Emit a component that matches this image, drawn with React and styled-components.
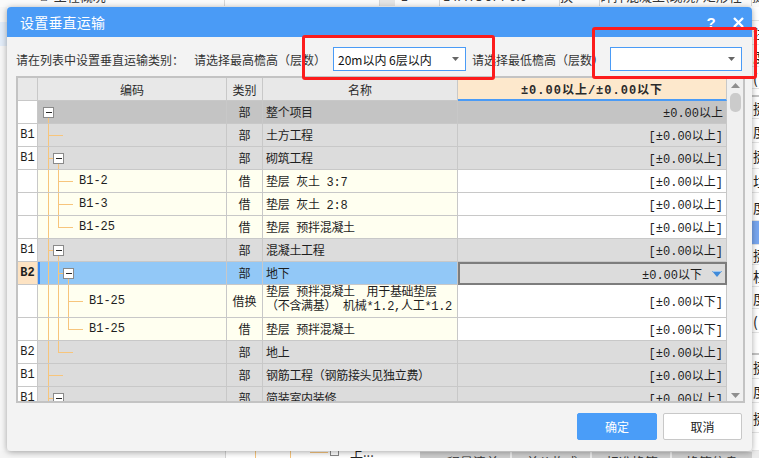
import React from "react";
import styled, { createGlobalStyle } from "styled-components";

const CJK = `"Noto Sans CJK SC", "Noto Sans", sans-serif`;
const GRID_FONT = `"Liberation Mono", "Noto Sans CJK SC", monospace`;
const TREE_LINE = "#f7c57c";
const COLS = "20px 189px 36px 195px 269px";

const GlobalStyle = createGlobalStyle`
  html, body {
    margin: 0;
    padding: 0;
    overflow: hidden;
    background: #ffffff;
  }
  * {
    box-sizing: border-box;
  }
`;

// rows of the grid, kind decides the colours
const rows = [
  { num: "", depth: 0, box: true, type: "部", name: "整个项目", value: "±0.00以上", kind: "root" },
  { num: "B1", depth: 1, type: "部", name: "土方工程", value: "[±0.00以上]", kind: "part" },
  { num: "B1", depth: 1, box: true, type: "部", name: "砌筑工程", value: "[±0.00以上]", kind: "part" },
  { num: "", depth: 2, code: "B1-2", type: "借", name: "垫层 灰土 3:7", value: "[±0.00以上]", kind: "item", through: [0] },
  { num: "", depth: 2, code: "B1-3", type: "借", name: "垫层 灰土 2:8", value: "[±0.00以上]", kind: "item", through: [0] },
  { num: "", depth: 2, code: "B1-25", last: true, type: "借", name: "垫层 预拌混凝土", value: "[±0.00以上]", kind: "item", through: [0] },
  { num: "B1", depth: 1, box: true, type: "部", name: "混凝土工程", value: "[±0.00以上]", kind: "part" },
  { num: "B2", depth: 2, box: true, type: "部", name: "地下", value: "±0.00以下", kind: "selected", through: [0] },
  {
    num: "", depth: 3, code: "B1-25", type: "借换",
    name: ["垫层 预拌混凝土　用于基础垫层", "（不含满基） 机械*1.2,人工*1.2"],
    value: "[±0.00以下]", kind: "item", through: [0, 1], tall: true,
  },
  { num: "", depth: 3, code: "B1-25", last: true, type: "借", name: "垫层 预拌混凝土", value: "[±0.00以下]", kind: "item", through: [0, 1] },
  { num: "B2", depth: 2, last: true, type: "部", name: "地上", value: "[±0.00以上]", kind: "part", through: [0] },
  { num: "B1", depth: 1, type: "部", name: "钢筋工程（钢筋接头见独立费）", value: "[±0.00以上]", kind: "part" },
  { num: "B1", depth: 1, box: true, type: "部", name: "简装室内装修", value: "[±0.00以上]", kind: "part" },
];

const rowBg = {
  root: "#c4c4c4",
  part: "#dcdcdc",
  item: "#fffff0",
  selected: "#92c8f7",
};
const valueBg = {
  root: "#c4c4c4",
  part: "#dcdcdc",
  item: "#ffffff",
  selected: "#dcdcdc",
};

const rightCells = [
  [14, ""], [24, "注"], [22, "度"], [22, "("], [8, "", "line"], [22, "揵"], [24, "度"],
  [26, "揵"], [24, "垃"], [28, "度"], [24, "", "blue"], [20, "揵"], [22, "柱"], [22, "度"],
  [24, "("], [22, "", "line"], [24, "揵"], [24, "度"], [30, "揵"], [18, ""],
];

const Tree = ({ row, h }) => {
  const mid = Math.floor(h / 2);
  const y = mid + 0.5;
  const d = row.depth;
  const parts = [];
  (row.through || []).forEach((k) => {
    const x = 10 + 10 * k + 0.5;
    parts.push(<line key={"t" + k} x1={x} y1={0} x2={x} y2={h} stroke={TREE_LINE} />);
  });
  let cx = 10;
  if (d > 0) {
    const px = 10 + 10 * (d - 1);
    cx = px + 10;
    parts.push(<line key="v" x1={px + 0.5} y1={0} x2={px + 0.5} y2={row.last ? y : h} stroke={TREE_LINE} />);
    parts.push(<line key="h" x1={px} y1={y} x2={row.box ? cx - 5 : px + 15} y2={y} stroke={TREE_LINE} />);
  }
  if (row.box) {
    parts.push(<line key="c" x1={cx + 0.5} y1={mid + 6} x2={cx + 0.5} y2={h} stroke={TREE_LINE} />);
    parts.push(<rect key="b" x={cx - 4.5} y={mid - 4.5} width={10} height={10} fill="#ffffff" stroke="#8a8a8a" />);
    parts.push(<line key="m" x1={cx - 2} y1={y} x2={cx + 4} y2={y} stroke="#2a2a2a" />);
  }
  return (
    <TreeSvg width={21 + 10 * d} height={h} shapeRendering="crispEdges">
      {parts}
    </TreeSvg>
  );
};

const Caret = ({ color = "#666" }) => (
  <svg width="7" height="4" viewBox="0 0 7 4">
    <path d="M0 0 H7 L3.5 4 Z" fill={color} />
  </svg>
);

export default function App() {
  return (
    <Page>
      <GlobalStyle />
      <Backdrop>
        <TopStrip>
          <TopCell $w={40} />
          <TopCell $w={185} $line>⌂&nbsp;&nbsp;工程概况</TopCell>
          <TopCell $w={155} $line />
          <TopCell $w={15} $bg="#e4e4e4" />
          <TopCell $w={45} $line>&nbsp;&nbsp;1</TopCell>
          <TopCell $w={120} $line>&nbsp;14.473 JPP0.0</TopCell>
          <TopCell $w={40} $line>换</TopCell>
          <TopCell $w={152} $line>碎拌混凝土(现浇) 矩形柱</TopCell>
          <TopCell $w={20}>揵</TopCell>
        </TopStrip>
        <Middle>
          <LeftStrip>
            <LeftBand />
          </LeftStrip>
          <Spacer />
          <RightStrip>
            {rightCells.map(([h, c, k], i) => (
              <RightCell key={i} $h={h} $kind={k}>{c}</RightCell>
            ))}
          </RightStrip>
        </Middle>
        <BottomStrip>
          <BottomSide />
          <BottomTree>
            <svg width="194" height="7" shapeRendering="crispEdges">
              <line x1="29.5" y1="0" x2="29.5" y2="7" stroke={TREE_LINE} />
              <line x1="64.5" y1="0" x2="64.5" y2="7" stroke={TREE_LINE} />
              <line x1="84" y1="1.5" x2="102" y2="1.5" stroke={TREE_LINE} />
              <rect x="104.5" y="-4.5" width="8" height="9" fill="#fff" stroke="#888" />
            </svg>
            <BottomText>上...</BottomText>
          </BottomTree>
          <Tabs>
            <Tab $w={90}>工程量清单</Tab>
            <Tab $w={78}>单价构成</Tab>
            <Tab $w={78}>标准换算</Tab>
            <Tab $w={80}>换算信息</Tab>
          </Tabs>
        </BottomStrip>
      </Backdrop>

      <Dialog>
        <TitleBar>
          <Title>设置垂直运输</Title>
          <TitleBtn>?</TitleBtn>
          <TitleBtn>
            <svg width="11" height="11" viewBox="0 0 11 11">
              <path d="M1 1 L10 10 M10 1 L1 10" stroke="#fff" strokeWidth="2.4" />
            </svg>
          </TitleBtn>
        </TitleBar>

        <Toolbar>
          <Label $w={178}>请在列表中设置垂直运输类别：</Label>
          <Label $w={139}>请选择最高檐高（层数）</Label>
          <Select $w={133}>
            <span>20m以内 6层以内</span>
            <Caret />
          </Select>
          <Label $w={138} $ml={6}>请选择最低檐高（层数）</Label>
          <Select $w={132}>
            <span />
            <Caret />
          </Select>
        </Toolbar>

        <GridFrame>
          <Table>
            <HeaderRow>
              <HeadCell />
              <HeadCell>编码</HeadCell>
              <HeadCell>类别</HeadCell>
              <HeadCell>名称</HeadCell>
              <HeadCell $active>±0.00以上/±0.00以下</HeadCell>
            </HeaderRow>
            <Body>
              {rows.map((r, i) => {
                const h = r.tall ? 33 : 23;
                const sel = r.kind === "selected";
                return (
                  <Row key={i} $h={h}>
                    <NumCell $sel={sel}>{r.num}</NumCell>
                    <CodeCell $bg={rowBg[r.kind]} $sel={sel}>
                      <Tree row={r} h={h - 1} />
                      {r.code && <CodeText>{r.code}</CodeText>}
                    </CodeCell>
                    <TypeCell $bg={rowBg[r.kind]}>{r.type}</TypeCell>
                    <NameCell $bg={rowBg[r.kind]} $tall={r.tall}>
                      {Array.isArray(r.name) ? r.name.map((t) => <div key={t}>{t}</div>) : r.name}
                    </NameCell>
                    <ValueCell $bg={valueBg[r.kind]} $sel={sel}>
                      {r.value}
                      {sel && (
                        <svg width="10" height="6" viewBox="0 0 10 6">
                          <path d="M0 0 H10 L5 6 Z" fill="#3f8ad9" />
                          <path d="M1 0.5 H9" stroke="#9cc7f2" strokeWidth="1" />
                        </svg>
                      )}
                    </ValueCell>
                  </Row>
                );
              })}
            </Body>
          </Table>
          <Scrollbar>
            <ScrollArrow $h={15}>
              <svg width="9" height="5" viewBox="0 0 9 5">
                <path d="M0 5 H9 L4.5 0 Z" fill="#8e8e8e" />
              </svg>
            </ScrollArrow>
            <Thumb />
            <Track />
            <ScrollArrow $h={12}>
              <svg width="9" height="5" viewBox="0 0 9 5">
                <path d="M0 0 H9 L4.5 5 Z" fill="#8e8e8e" />
              </svg>
            </ScrollArrow>
          </Scrollbar>
        </GridFrame>

        <Footer>
          <Button $primary>确定</Button>
          <Button>取消</Button>
        </Footer>
      </Dialog>

      <RedMark $x={302} $y={35} $w={193} $h={45} />
      <RedMark $x={592} $y={27} $w={165} $h={52} />
    </Page>
  );
}

const Page = styled.div`
  position: relative;
  width: 759px;
  height: 458px;
  overflow: hidden;
  background: #ffffff;
  font-family: ${CJK};
`;

const Backdrop = styled.div`
  display: grid;
  grid-template-rows: 7px 1fr 7px;
  width: 100%;
  height: 100%;
`;

const TopStrip = styled.div`
  display: flex;
  overflow: hidden;
  background: #fafafa;
`;

const TopCell = styled.div`
  flex: 0 0 ${(p) => p.$w}px;
  height: 20px;
  margin-top: -14px;
  line-height: 20px;
  font-size: 13px;
  color: #333;
  white-space: nowrap;
  overflow: hidden;
  background: ${(p) => p.$bg || "transparent"};
  border-right: ${(p) => (p.$line ? "1px solid #d6d6d6" : "none")};
`;

const Middle = styled.div`
  display: flex;
  min-height: 0;
`;

const LeftStrip = styled.div`
  width: 7px;
  background: #f6f6f6;
  padding-top: 15px;
`;

const LeftBand = styled.div`
  height: 24px;
  background: #e2ecf8;
`;

const Spacer = styled.div`
  flex: 1;
`;

const RightStrip = styled.div`
  width: 7px;
  display: flex;
  flex-direction: column;
  overflow: hidden;
  background: #ffffff;
`;

const RightCell = styled.div`
  flex: none;
  height: ${(p) => p.$h}px;
  display: flex;
  align-items: center;
  padding-left: 1px;
  font-size: 14px;
  color: #222;
  background: ${(p) => (p.$kind === "blue" ? "#78a6ef" : "#ffffff")};
  border-bottom: ${(p) => (p.$kind === "line" ? "2px solid #c4c4c4" : "1px solid #e4e4e4")};
`;

const BottomStrip = styled.div`
  display: flex;
  overflow: hidden;
`;

const BottomSide = styled.div`
  width: 226px;
  background: #f4f4f4;
  border-right: 1px solid #d2d2d2;
`;

const BottomTree = styled.div`
  width: 194px;
  display: flex;
  align-items: flex-start;
  background: #ffffff;

  svg {
    flex: none;
  }
`;

const BottomText = styled.span`
  margin-left: -70px;
  margin-top: -9px;
  font-size: 13px;
  color: #222;
`;

const Tabs = styled.div`
  flex: 1;
  display: flex;
  gap: 2px;
  background: #ebebeb;
  padding-top: 1px;
`;

const Tab = styled.div`
  flex: 0 0 ${(p) => p.$w}px;
  background: #cdcdcd;
  font-size: 13px;
  line-height: 20px;
  padding-left: 14px;
  color: #333;
  white-space: nowrap;
  overflow: hidden;
`;

const Dialog = styled.div`
  position: absolute;
  left: 7px;
  top: 7px;
  width: 745px;
  height: 444px;
  display: flex;
  flex-direction: column;
  background: #f3f3f3;
  border-radius: 4px;
  overflow: hidden;
  box-shadow: 0 1px 6px rgba(0, 0, 0, 0.35);
`;

const TitleBar = styled.div`
  flex: none;
  height: 30px;
  display: flex;
  align-items: center;
  padding: 0 4px 0 13px;
  background: #4a9bf6;
  color: #ffffff;
`;

const Title = styled.div`
  flex: 1;
  font-size: 14px;
  letter-spacing: 0.2px;
`;

const TitleBtn = styled.div`
  width: 20px;
  margin-left: 7px;
  display: flex;
  justify-content: center;
  align-items: center;
  font: bold 15px "Liberation Sans", sans-serif;
`;

const Toolbar = styled.div`
  flex: none;
  height: 39px;
  display: flex;
  align-items: center;
  padding: 10px 0 5px 9px;
  font-size: 12px;
  color: #333;
`;

const Label = styled.div`
  flex: none;
  width: ${(p) => p.$w}px;
  margin-left: ${(p) => p.$ml || 0}px;
  white-space: nowrap;
`;

const Select = styled.div`
  flex: none;
  width: ${(p) => p.$w}px;
  height: 24px;
  display: flex;
  align-items: center;
  justify-content: space-between;
  padding: 0 6px 0 4px;
  background: #ffffff;
  border: 1px solid #4a9bf6;
  font-size: 12px;
  color: #111;
  white-space: pre;
`;

const GridFrame = styled.div`
  flex: none;
  height: 327px;
  margin: 0 7px 0 9px;
  display: flex;
  border: 2px solid #c3c3c3;
  background: #ffffff;
  font-family: ${GRID_FONT};
`;

const Table = styled.div`
  width: 709px;
  display: flex;
  flex-direction: column;
`;

const HeaderRow = styled.div`
  display: grid;
  grid-template-columns: ${COLS};
  height: 23px;
  flex: none;
`;

const HeadCell = styled.div`
  display: flex;
  align-items: center;
  justify-content: center;
  font-family: ${(p) => (p.$active ? GRID_FONT : CJK)};
  font-size: 12px;
  color: #2a2a2a;
  white-space: nowrap;
  background: ${(p) => (p.$active ? "#fde8cc" : "#e8e8e8")};
  border-right: 1px solid #c8c8c8;
  border-bottom: ${(p) => (p.$active ? "2px solid #4a9bf6" : "1px solid #c8c8c8")};
  font-weight: ${(p) => (p.$active ? "bold" : "normal")};
  letter-spacing: ${(p) => (p.$active ? "1px" : "0")};
`;

const Body = styled.div`
  flex: 1;
  overflow: hidden;
`;

const Row = styled.div`
  display: grid;
  grid-template-columns: ${COLS};
  height: ${(p) => p.$h}px;
`;

const Cell = styled.div`
  display: flex;
  align-items: center;
  min-width: 0;
  overflow: hidden;
  white-space: nowrap;
  font-size: 12px;
  color: #1e1e1e;
  background: ${(p) => p.$bg || "#ffffff"};
  border-right: 1px solid #c8c8c8;
  border-bottom: 1px solid #c8c8c8;
`;

const NumCell = styled(Cell)`
  justify-content: center;
  background: ${(p) => (p.$sel ? "#fde3c3" : "#ffffff")};
  font-weight: ${(p) => (p.$sel ? "bold" : "normal")};
`;

const CodeCell = styled(Cell)`
  align-items: stretch;
  box-shadow: ${(p) => (p.$sel ? "inset 2px 0 0 #3b8df5" : "none")};
`;

const TreeSvg = styled.svg`
  flex: none;
  display: block;
`;

const CodeText = styled.span`
  align-self: center;
`;

const TypeCell = styled(Cell)`
  justify-content: center;
`;

const NameCell = styled(Cell)`
  padding-left: 3px;
  white-space: pre;
  letter-spacing: -0.3px;
  flex-direction: ${(p) => (p.$tall ? "column" : "row")};
  align-items: ${(p) => (p.$tall ? "flex-start" : "center")};
  padding-top: ${(p) => (p.$tall ? "1px" : "0")};
  line-height: ${(p) => (p.$tall ? "14px" : "normal")};
`;

const ValueCell = styled(Cell)`
  justify-content: flex-end;
  gap: 10px;
  padding-right: 3px;
  ${(p) => p.$sel && `border: 2px solid #7d7d7d;`}
`;

const Scrollbar = styled.div`
  flex: none;
  width: 16px;
  display: flex;
  flex-direction: column;
  align-items: center;
  background: #f0f0f0;
`;

const ScrollArrow = styled.div`
  flex: none;
  height: ${(p) => p.$h}px;
  display: flex;
  align-items: center;
  justify-content: center;
`;

const Thumb = styled.div`
  flex: none;
  width: 11px;
  height: 19px;
  border-radius: 5px;
  background: #cbcbcb;
`;

const Track = styled.div`
  flex: 1;
`;

const Footer = styled.div`
  flex: 1;
  display: flex;
  justify-content: flex-end;
  align-items: flex-start;
  gap: 6px;
  padding: 10px 10px 0 0;
`;

const Button = styled.div`
  width: ${(p) => (p.$primary ? 80 : 79)}px;
  height: 27px;
  display: flex;
  align-items: center;
  justify-content: center;
  border-radius: 2px;
  font-size: 12px;
  color: ${(p) => (p.$primary ? "#ffffff" : "#222")};
  background: ${(p) => (p.$primary ? "#4a9df8" : "#ffffff")};
  border: 1px solid ${(p) => (p.$primary ? "#4a9df8" : "#c8c8c8")};
`;

const RedMark = styled.div`
  position: absolute;
  left: ${(p) => p.$x}px;
  top: ${(p) => p.$y}px;
  width: ${(p) => p.$w}px;
  height: ${(p) => p.$h}px;
  border: 3px solid #fc1c1c;
  border-radius: 3px;
  pointer-events: none;
`;
